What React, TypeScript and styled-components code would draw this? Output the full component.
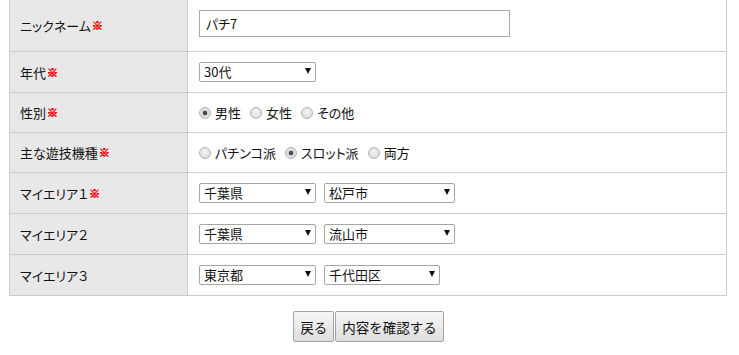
import React from "react";
import styled, { createGlobalStyle } from "styled-components";

const Global = createGlobalStyle`
  html, body { margin: 0; padding: 0; background: #fff; }
  body {
    font-family: "Noto Sans CJK JP", "Noto Sans", sans-serif;
    font-size: 13px;
    color: #111;
    font-feature-settings: "palt";
  }
`;

const Page = styled.div`
  width: 718px;
  padding-left: 9px;
`;

const Table = styled.div`
  border-left: 1px solid #cccccc;
  border-right: 1px solid #cccccc;
`;

const Row = styled.div`
  display: grid;
  grid-template-columns: 178px 1fr;
  border-bottom: 1px solid #cccccc;
`;

const Label = styled.div`
  background: #e8e8e8;
  border-right: 1px solid #cccccc;
  padding: 0 10px;
  display: flex;
  align-items: center;
  line-height: 19px;
  white-space: nowrap;
`;

const Required = styled.span`
  color: #ff0000;
  font-weight: 900;
  font-size: 11px;
  margin-left: 1px;
  font-feature-settings: normal;
  text-shadow: 0.4px 0 0 #ff0000, -0.4px 0 0 #ff0000, 0 0.4px 0 #ff0000;
`;

const Value = styled.div<{ $pb?: number }>`
  padding: 10px 11px ${(p) => p.$pb ?? 10}px;
  display: flex;
  align-items: center;
  gap: 8px;
  min-height: 19px;
`;

const TextInput = styled.input`
  box-sizing: border-box;
  width: 311px;
  height: 27px;
  border: 1px solid #a9a9a9;
  padding: 0 6px;
  font: inherit;
  font-size: 13px;
  color: #111;
  outline: none;
`;

const SelectBox = styled.div<{ $w: number }>`
  position: relative;
  width: ${(p) => p.$w}px;
  height: 20px;
`;

const NativeSelect = styled.select`
  appearance: none;
  -webkit-appearance: none;
  box-sizing: border-box;
  width: 100%;
  height: 20px;
  margin: 0;
  padding: 0 16px 0 4px;
  border: 1px solid #a6a6a6;
  border-radius: 2px;
  background: #fff;
  font-family: "Noto Sans CJK JP", sans-serif;
  font-size: 13px;
  line-height: 18px;
  color: #111;
  outline: none;
`;

const Arrow = styled.span`
  position: absolute;
  right: 5px;
  top: 6px;
  width: 0;
  height: 0;
  border-left: 3.5px solid transparent;
  border-right: 3.5px solid transparent;
  border-top: 6px solid #111;
  pointer-events: none;
`;

const RadioGroup = styled.div`
  display: flex;
  align-items: center;
  gap: 9px;
`;

const RadioOption = styled.label`
  display: flex;
  align-items: center;
  gap: 4px;
  line-height: 19px;
`;

const Radio = styled.input.attrs({ type: "radio" })`
  appearance: none;
  -webkit-appearance: none;
  box-sizing: border-box;
  width: 12px;
  height: 12px;
  margin: 0;
  border-radius: 50%;
  border: 1px solid #b4b4b4;
  background: radial-gradient(circle at 50% 40%, #f6f6f6 0%, #e2e2e2 60%, #d4d4d4 100%);
  &:checked {
    background: radial-gradient(circle, #4a4a4a 0, #4a4a4a 2px, #d8d8d8 2.6px, #ececec 100%);
  }
`;

const Actions = styled.div`
  display: flex;
  justify-content: center;
  gap: 1px;
  padding-top: 15px;
  padding-left: 1px;
`;

const Button = styled.button`
  box-sizing: border-box;
  height: 31px;
  padding: 0 6px;
  border: 1px solid #a3a3a3;
  border-radius: 2px;
  background: linear-gradient(#f7f7f7, #dddddd);
  font-family: "Noto Sans CJK JP", sans-serif;
  font-size: 13.5px;
  color: #111;
  cursor: pointer;
`;

function Select({ width, value }: { width: number; value: string }) {
  return (
    <SelectBox $w={width}>
      <NativeSelect defaultValue={value}>
        <option>{value}</option>
      </NativeSelect>
      <Arrow />
    </SelectBox>
  );
}

function Radios({ name, options, checked }: { name: string; options: string[]; checked: number }) {
  return (
    <RadioGroup>
      {options.map((o, i) => (
        <RadioOption key={o}>
          <Radio name={name} defaultChecked={i === checked} />
          {o}
        </RadioOption>
      ))}
    </RadioGroup>
  );
}

export default function App() {
  return (
    <>
      <Global />
      <Page>
        <Table>
          <Row>
            <Label>
              ニックネーム<Required>※</Required>
            </Label>
            <Value $pb={14}>
              <TextInput defaultValue="パチ7" />
            </Value>
          </Row>
          <Row>
            <Label>
              年代<Required>※</Required>
            </Label>
            <Value>
              <Select width={117} value="30代" />
            </Value>
          </Row>
          <Row>
            <Label>
              性別<Required>※</Required>
            </Label>
            <Value>
              <Radios name="sex" options={["男性", "女性", "その他"]} checked={0} />
            </Value>
          </Row>
          <Row>
            <Label>
              主な遊技機種<Required>※</Required>
            </Label>
            <Value>
              <Radios name="kind" options={["パチンコ派", "スロット派", "両方"]} checked={1} />
            </Value>
          </Row>
          <Row>
            <Label>
              マイエリア１<Required>※</Required>
            </Label>
            <Value>
              <Select width={117} value="千葉県" />
              <Select width={131} value="松戸市" />
            </Value>
          </Row>
          <Row>
            <Label>マイエリア２</Label>
            <Value>
              <Select width={117} value="千葉県" />
              <Select width={131} value="流山市" />
            </Value>
          </Row>
          <Row>
            <Label>マイエリア３</Label>
            <Value>
              <Select width={117} value="東京都" />
              <Select width={116} value="千代田区" />
            </Value>
          </Row>
        </Table>
        <Actions>
          <Button type="button">戻る</Button>
          <Button type="submit">内容を確認する</Button>
        </Actions>
      </Page>
    </>
  );
}
